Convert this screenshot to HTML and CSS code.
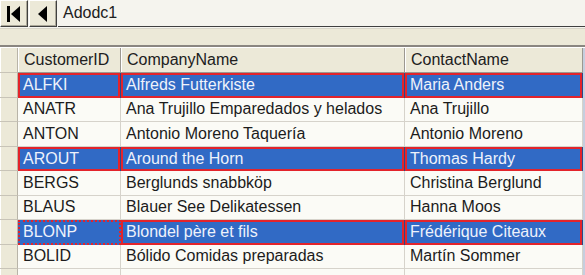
FILE: index.html
```html
<!DOCTYPE html>
<html>
<head>
<meta charset="utf-8">
<link rel="stylesheet" href="styles.css">
</head>
<body>
<div class="app">
  <div class="nav">
    <div class="navbtn">
      <svg width="14" height="18" viewBox="0 0 14 18"><rect x="0" y="1" width="3" height="16" fill="#000"/><polygon points="13,1 13,17 4,9" fill="#000"/></svg>
    </div>
    <div class="navbtn">
      <svg width="10" height="18" viewBox="0 0 10 18"><polygon points="9,1 9,17 0,9" fill="#000"/></svg>
    </div>
    <div class="caption">Adodc1</div>
  </div>
  <div class="band"></div>
  <div class="grid">
    <div class="row hdr"><div class="sel"></div><div class="cell">CustomerID</div><div class="cell">CompanyName</div><div class="cell">ContactName</div><div class="vs"></div></div>
    <div class="row on"><div class="sel"></div><div class="cell">ALFKI</div><div class="cell">Alfreds Futterkiste</div><div class="cell">Maria Anders</div><div class="vs"></div></div>
    <div class="row"><div class="sel"></div><div class="cell">ANATR</div><div class="cell">Ana Trujillo Emparedados y helados</div><div class="cell">Ana Trujillo</div><div class="vs"></div></div>
    <div class="row"><div class="sel"></div><div class="cell">ANTON</div><div class="cell">Antonio Moreno Taquería</div><div class="cell">Antonio Moreno</div><div class="vs"></div></div>
    <div class="row on"><div class="sel"></div><div class="cell">AROUT</div><div class="cell">Around the Horn</div><div class="cell">Thomas Hardy</div><div class="vs"></div></div>
    <div class="row"><div class="sel"></div><div class="cell">BERGS</div><div class="cell">Berglunds snabbköp</div><div class="cell">Christina Berglund</div><div class="vs"></div></div>
    <div class="row"><div class="sel"></div><div class="cell">BLAUS</div><div class="cell">Blauer See Delikatessen</div><div class="cell">Hanna Moos</div><div class="vs"></div></div>
    <div class="row on"><div class="sel"></div><div class="cell focus">BLONP</div><div class="cell">Blondel père et fils</div><div class="cell">Frédérique Citeaux</div><div class="vs"></div></div>
    <div class="row"><div class="sel"></div><div class="cell">BOLID</div><div class="cell">Bólido Comidas preparadas</div><div class="cell">Martín Sommer</div><div class="vs"></div></div>
    <div class="row"><div class="sel"></div><div class="cell"></div><div class="cell"></div><div class="cell"></div><div class="vs"></div></div>
  </div>
</div>
</body>
</html>
```

FILE: styles.css
```css
html, body {
  margin: 0;
  padding: 0;
  background: #ece9d8;
}
.app {
  width: 585px;
  height: 275px;
  overflow: hidden;
  font-family: "Liberation Sans", Arial, sans-serif;
  font-size: 16px;
  color: #1c1c1c;
}
.nav {
  display: flex;
  height: 29px;
  background: #f5f4ee;
  box-sizing: border-box;
  border-bottom: 1px solid #d8d5c8;
}
.navbtn {
  width: 28px;
  height: 27px;
  box-sizing: border-box;
  background: #ece9d8;
  border-top: 1px solid #ffffff;
  border-left: 1px solid #ffffff;
  border-right: 1px solid #404040;
  border-bottom: 1px solid #404040;
  box-shadow: inset -1px -1px 0 #aca899;
  display: flex;
  align-items: center;
  justify-content: center;
  margin-right: 1px;
}
.caption {
  flex: 1;
  height: 27px;
  box-sizing: border-box;
  border-bottom: 1px solid #404040;
  padding-left: 5px;
  line-height: 25px;
  font-size: 16px;
  color: #202020;
}
.band {
  height: 16px;
}
.grid {
  border-top: 2px solid #8a8680;
  box-shadow: inset 0 1px 0 #ffffff;
  background: #fbfbf6;
}
.row {
  display: grid;
  grid-template-columns: 18px 103px 284px 178px 2px;
  height: 24.5px;
}
.row.hdr {
  height: 26px;
  background: #ece9d8;
  border-top: 1px solid #ffffff;
  box-sizing: border-box;
}
.sel {
  background: #ece9d8;
  border-right: 1px solid #b8b4a8;
  border-bottom: 1px solid #c8c4b8;
  box-shadow: inset 1px 0 0 #ffffff;
}
.cell {
  box-sizing: border-box;
  border-right: 1px solid #d6d3cb;
  border-bottom: 1px solid #d6d3cb;
  padding-left: 5px;
  white-space: nowrap;
  overflow: hidden;
  display: flex;
  align-items: center;
}
.hdr .cell {
  border-right: 1px solid #9c9890;
  border-bottom: 1px solid #9c9890;
  box-shadow: inset 1px 0 0 #ffffff;
  padding-left: 6px;
  color: #202020;
}
.row.on .cell {
  background: #316ac5;
  color: #eef2fb;
  border-right-color: #2a4a88;
  border-bottom: none;
  box-shadow: inset 0 0 0 2px #e3242b;
}
.row.on .cell.focus {
  box-shadow: none;
  border: 2px dotted #e3242b;
  border-right-width: 2px;
  padding-left: 3px;
}
.vs {
  background: #c6cede;
}
```
